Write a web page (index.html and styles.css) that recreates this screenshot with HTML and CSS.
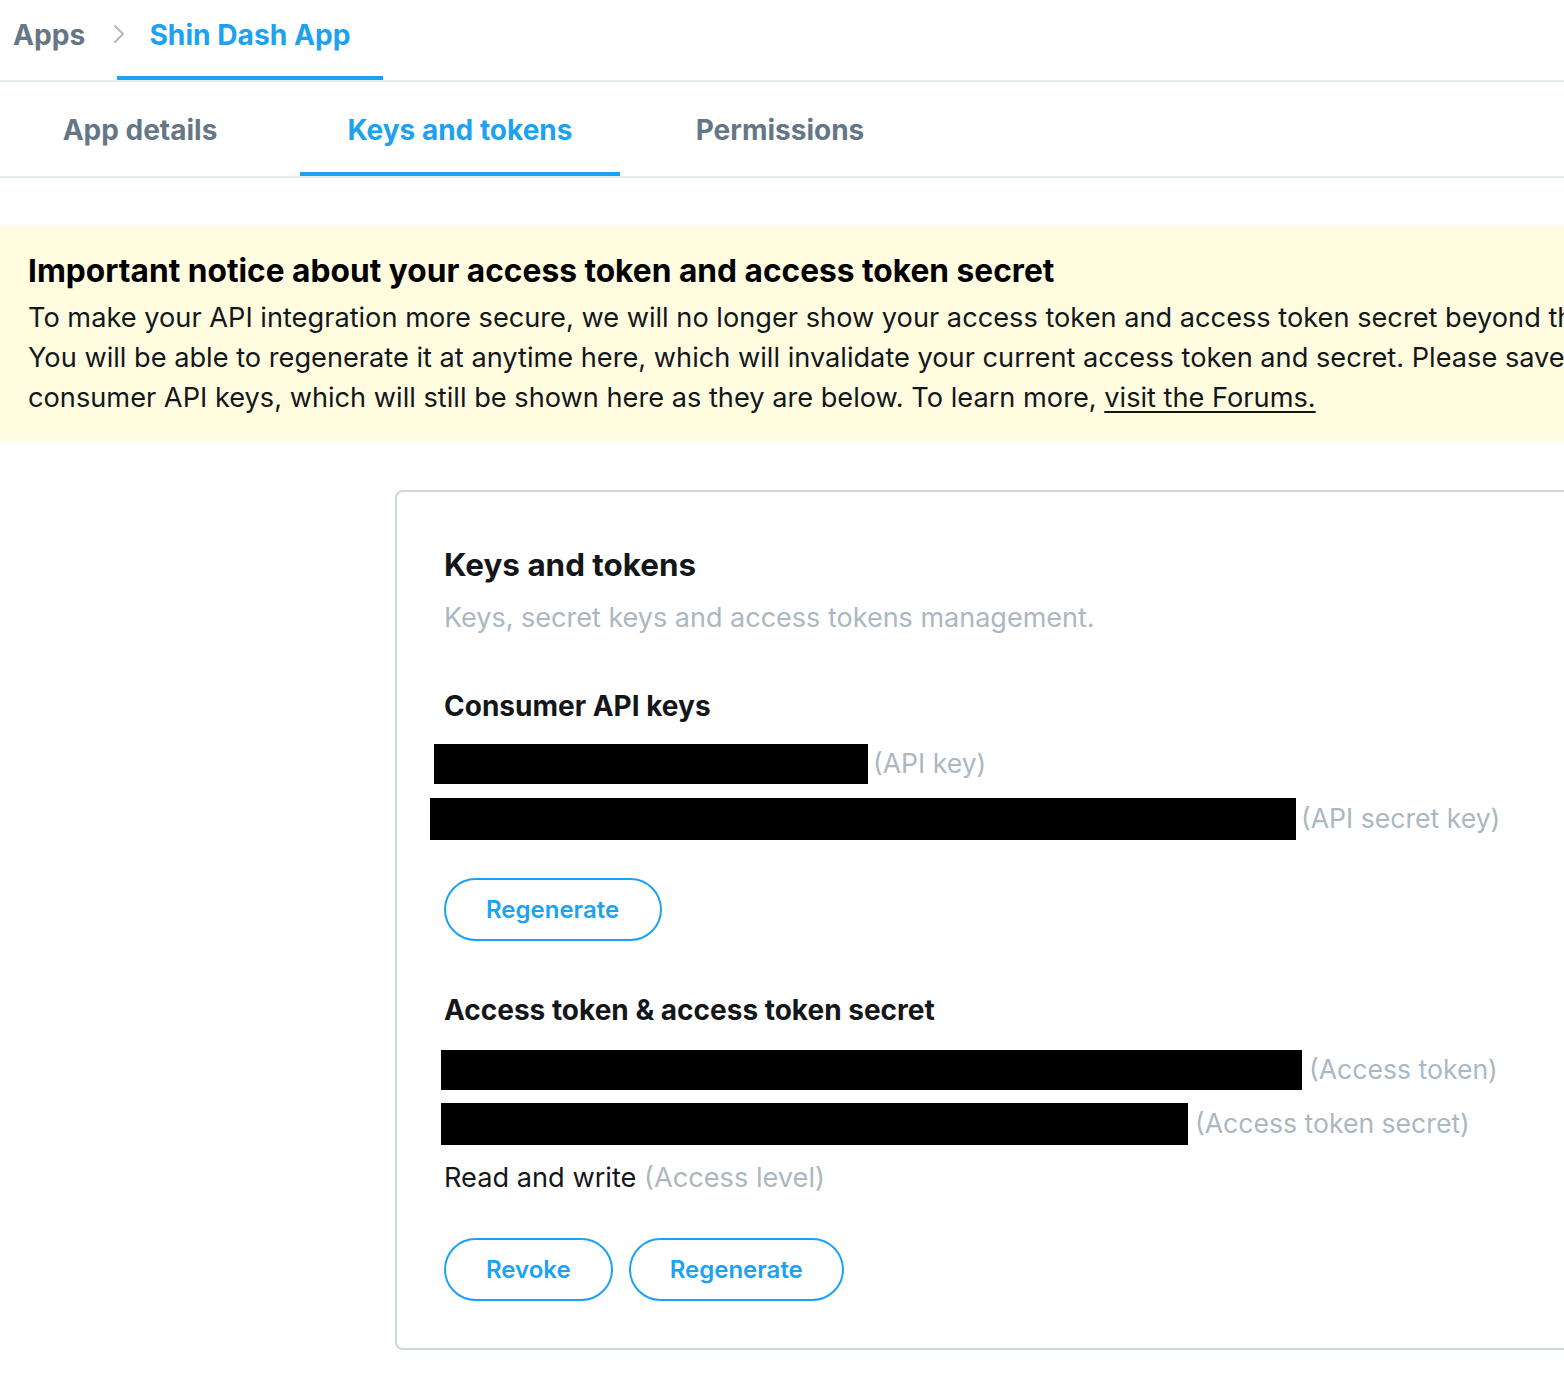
FILE: index.html
```html
<!DOCTYPE html>
<html lang="en">
<head>
<meta charset="utf-8">
<title>Shin Dash App - Keys and tokens</title>
<link rel="stylesheet" href="styles.css">
</head>
<body>
<div class="page">
  <nav class="crumbs">
    <a class="crumb">Apps</a>
    <span class="chev"><svg width="12" height="20" viewBox="0 0 12 20"><polyline points="2,2 10,10 2,18" fill="none" stroke="#AAB8C2" stroke-width="2" stroke-linecap="round" stroke-linejoin="round"/></svg></span>
    <a class="crumb active">Shin Dash App</a>
  </nav>
  <nav class="tabs">
    <a class="tab">App details</a>
    <a class="tab active">Keys and tokens</a>
    <a class="tab">Permissions</a>
  </nav>
  <section class="notice">
    <h2 class="notice-title">Important notice about your access token and access token secret</h2>
    <p class="notice-body">To make your API integration more secure, we will no longer show your access token and access token secret beyond the initial creation.<br>You will be able to regenerate it at anytime here, which will invalidate your current access token and secret. Please save your access token and access token secret as well as your<br>consumer API keys, which will still be shown here as they are below. To learn more, <a class="link">visit the Forums.</a></p>
  </section>
  <div class="main">
    <section class="card">
      <h1 class="card-title">Keys and tokens</h1>
      <p class="card-sub">Keys, secret keys and access tokens management.</p>

      <h3 class="section-title">Consumer API keys</h3>
      <div class="key-row r1"><span class="redact" style="width:434px;height:40px;margin-left:-10px"></span><span class="hint">(API key)</span></div>
      <div class="key-row r2"><span class="redact" style="width:866px;height:42px;margin-left:-14px"></span><span class="hint">(API secret key)</span></div>
      <div class="actions a1"><button class="btn">Regenerate</button></div>

      <h3 class="section-title s2">Access token &amp; access token secret</h3>
      <div class="key-row r3"><span class="redact" style="width:861px;height:40px;margin-left:-3px"></span><span class="hint">(Access token)</span></div>
      <div class="key-row r4"><span class="redact" style="width:747px;height:42px;margin-left:-3px"></span><span class="hint">(Access token secret)</span></div>
      <p class="level">Read and write <span class="hint-inline">(Access level)</span></p>
      <div class="actions a2"><button class="btn revoke">Revoke</button><button class="btn">Regenerate</button></div>
    </section>
  </div>
</div>
</body>
</html>
```
FILE: styles.css
```css
html, body {
  margin: 0;
  padding: 0;
  background: #ffffff;
  overflow: hidden;
}
body {
  font-family: Inter, "Noto Sans", "Liberation Sans", sans-serif;
  color: #14171A;
  width: 1564px;
}
.page {
  width: 1564px;
  overflow: hidden;
}
a { cursor: pointer; }

.crumbs {
  display: flex;
  height: 80px;
  border-bottom: 2px solid #E6ECF0;
  padding-left: 13px;
}
.crumb {
  box-sizing: border-box;
  height: 80px;
  padding-top: 15px;
  line-height: 40px;
  font-size: 28.2px;
  font-weight: 700;
  color: #657786;
}
.crumb.active {
  color: #1DA1F2;
  padding-left: 32px;
  padding-right: 32px;
  border-bottom: 4px solid #1DA1F2;
}
.chev {
  display: flex;
  align-items: flex-start;
  padding-top: 24px;
  margin-left: 28px;
  margin-right: -40px;
  width: 12px;
}
.chev svg { display: block; }
.chev + .crumb.active { margin-left: 32px; }

.tabs {
  display: flex;
  height: 94px;
  border-bottom: 2px solid #E6ECF0;
  margin-left: -20px;
}
.tab {
  box-sizing: border-box;
  width: 320px;
  height: 94px;
  padding-top: 28px;
  line-height: 40px;
  text-align: center;
  font-size: 28px;
  font-weight: 700;
  color: #657786;
}
.tab.active {
  color: #1DA1F2;
  border-bottom: 4px solid #1DA1F2;
}

.notice {
  margin-top: 48px;
  background: #FFFCE0;
  padding: 25px 0 23px 28px;
  white-space: nowrap;
}
.notice-title {
  margin: 0 0 7px;
  font-size: 31.7px;
  line-height: 40px;
  font-weight: 700;
  color: #000;
}
.notice-body {
  margin: 0;
  font-size: 27.2px;
  line-height: 40px;
  color: #14171A;
}
.link {
  color: #14171A;
  text-decoration: underline;
  text-underline-offset: 4px;
}

.main {
  margin-top: 49px;
  padding-left: 395px;
}
.card {
  width: 1400px;
  box-sizing: border-box;
  border: 2px solid #CCD6DD;
  border-radius: 8px;
  padding: 53px 48px 47px 47px;
}
.card-title {
  margin: 0;
  font-size: 31.4px;
  line-height: 40px;
  font-weight: 700;
}
.card-sub {
  margin: 13px 0 0;
  font-size: 27px;
  line-height: 40px;
  color: #AAB8C2;
}
.section-title {
  margin: 48px 0 0;
  font-size: 28px;
  line-height: 40px;
  font-weight: 700;
}
.section-title.s2 { margin-top: 49px; }

.key-row {
  display: flex;
  align-items: center;
}
.r1 { margin-top: 18px; }
.r2 { margin-top: 14px; }
.r3 { margin-top: 20px; }
.r4 { margin-top: 13px; }
.redact {
  display: block;
  background: #000;
  flex: none;
}
.hint {
  margin-left: 5px;
  font-size: 26.6px;
  line-height: 40px;
  color: #AAB8C2;
  white-space: nowrap;
  position: relative;
  top: -1px;
}
.r3 .hint, .r4 .hint { margin-left: 7px; }

.level {
  margin: 13px 0 0;
  font-size: 27.2px;
  line-height: 40px;
}
.hint-inline { color: #AAB8C2; }

.actions {
  display: flex;
  gap: 16px;
}
.a1 { margin-top: 38px; }
.a2 { margin-top: 40px; }
.btn {
  box-sizing: border-box;
  height: 63px;
  padding: 0 41px;
  border: 2px solid #1DA1F2;
  border-radius: 32px;
  background: #fff;
  color: #1DA1F2;
  font-family: Inter, "Noto Sans", "Liberation Sans", sans-serif;
  font-size: 24px;
  font-weight: 600;
  cursor: pointer;
}
.a1 .btn { padding: 0 41px 0 40px; }
.btn.revoke { padding: 0 40px; }
.a2 .btn + .btn { padding: 0 39px; }
```
